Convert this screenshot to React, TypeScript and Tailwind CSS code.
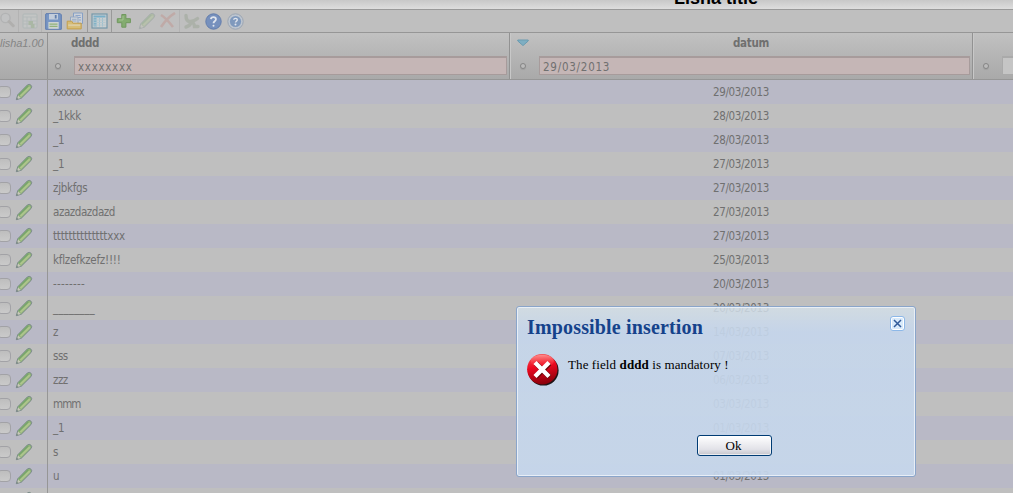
import React from "react";

const TABLE_FONT = "font-['DejaVu_Sans_Condensed','DejaVu_Sans',sans-serif] [font-stretch:condensed]";

const rows = [
  { text: "xxxxxx", date: "29/03/2013", track: "tracking-[-1px]" },
  { text: "_1kkk", date: "28/03/2013", track: "tracking-[-0.4px]" },
  { text: "_1", date: "28/03/2013", track: "tracking-[-0.1px]" },
  { text: "_1", date: "27/03/2013", track: "tracking-[-0.1px]" },
  { text: "zjbkfgs", date: "27/03/2013", track: "tracking-[-0.3px]" },
  { text: "azazdazdazd", date: "27/03/2013", track: "tracking-[-0.44px]" },
  { text: "ttttttttttttttxxx", date: "27/03/2013", track: "tracking-[-0.18px]" },
  { text: "kflzefkzefz!!!!", date: "25/03/2013", track: "tracking-[-0.25px]" },
  { text: "--------", date: "20/03/2013", track: "tracking-[0.25px]" },
  { text: "________", date: "20/03/2013", track: "tracking-[0.05px]" },
  { text: "z", date: "14/03/2013", track: "tracking-[0px]" },
  { text: "sss", date: "07/03/2013", track: "tracking-[-0.5px]" },
  { text: "zzz", date: "06/03/2013", track: "tracking-[-0.5px]" },
  { text: "mmm", date: "03/03/2013", track: "tracking-[-0.9px]" },
  { text: "_1", date: "01/03/2013", track: "tracking-[-0.1px]" },
  { text: "s", date: "01/03/2013", track: "tracking-[0px]" },
  { text: "u", date: "01/03/2013", track: "tracking-[0px]" },
  { text: "", date: "", track: "tracking-[0px]" },
];

function Pencil({ className = "" }: { className?: string }) {
  return (
    <svg width="18" height="18" viewBox="0 0 18 18" className={`shrink-0 ${className}`}>
      <path d="M1.3 16.7 2.7 11.8 12.3 2Q14.2.6 15.9 2.1T15.9 5.7L6.3 15.2Z" fill="#8fb277" stroke="#7d8c8d" strokeWidth="1" strokeLinejoin="round" />
      <path d="M4 12 13.3 2.8" stroke="#76a56b" strokeWidth="1.5" />
      <path d="M5.4 13.3 14.9 4" stroke="#adc58c" strokeWidth="1.9" />
      <path d="M3.1 12.4 5.8 14.9 2.3 15.9Z" fill="#c9c7bd" />
      <path d="m1.3 16.7.6-1.9 1.4 1.3Z" fill="#7d8688" />
    </svg>
  );
}

function Magnifier() {
  return (
    <svg width="18" height="18" viewBox="0 0 18 18" className="opacity-25">
      <circle cx="5.5" cy="6" r="4.6" fill="#c9cdd0" stroke="#8c9093" strokeWidth="1.4" />
      <path d="m9 9.5 4.2 4.2" stroke="#84807c" strokeWidth="3" strokeLinecap="round" />
    </svg>
  );
}

function TableDown() {
  return (
    <svg width="16" height="16" viewBox="0 0 16 16" className="opacity-30">
      <rect x="1" y="1" width="14" height="14" rx="1" fill="#cdd3d2" stroke="#8fa7a5" />
      <path d="M1 4h14M5 4v11M9 4v11M1 8h14M1 11h14" stroke="#99afae" />
      <path d="M6.5 8h4.5v3h1.5v4H9v-3H6.5Z" fill="#7da76b" />
    </svg>
  );
}

function Floppy() {
  return (
    <svg width="17" height="17" viewBox="0 0 17 17" className="shrink-0">
      <path d="M1 .7h14.3l1 1.1V16.3H.7V1.2Z" fill="#7896c4" stroke="#5d7bae" />
      <rect x="4" y="1" width="9" height="5.5" fill="#c3cddb" />
      <rect x="9.8" y="2" width="1.8" height="3.5" fill="#617fac" />
      <rect x="3.4" y="9" width="10.3" height="6.8" fill="#ced4d2" />
      <path d="M4.5 11.2h8M4.5 13.3h8" stroke="#91b37b" strokeWidth="1.2" />
    </svg>
  );
}

function Documents() {
  return (
    <svg width="18" height="18" viewBox="0 0 18 18" className="shrink-0">
      <path d="M7.5 1h9v10.5h-9Z" fill="#cbd0d7" stroke="#86a0c5" />
      <path d="M9.5 3.5h5M10 5.5h5M13 8h2" stroke="#8da5c9" />
      <path d="M4.5 5h7.5v8H4.5Z" fill="#ced2d6" stroke="#93a7c3" />
      <path d="M6 7.3h4.5M6 9h4.5" stroke="#9aadc7" />
      <path d="M1.2 9.2h4.6l1 2h8.4v5.7H1.2Z" fill="#d6bd76" stroke="#c49f4c" />
      <path d="M2.2 13.2h12" stroke="#dccda3" strokeWidth="1.8" />
    </svg>
  );
}

function Grid() {
  return (
    <svg width="17" height="16" viewBox="0 0 17 16" className="shrink-0">
      <rect x="1" y="1" width="15" height="14" fill="#c9ced0" stroke="#7598aa" strokeWidth="1.2" />
      <path d="M2.5 3.5h12" stroke="#78afc8" strokeWidth="2" />
      <path d="M2.5 5h3v8.5h-3Z" fill="#83b2c6" />
      <path d="M5.5 5v8.5M8.5 5v8.5M11.5 5v8.5" stroke="#9fbfcd" />
      <path d="M2.5 7h12M2.5 9.5h12M2.5 12h12" stroke="#b0c6cf" strokeWidth=".9" />
    </svg>
  );
}

function HelpIcon({ ringed = false }: { ringed?: boolean }) {
  return (
    <svg width="17" height="17" viewBox="0 0 17 17">
      <circle cx="8.5" cy="8.5" r="7.7" fill={ringed ? "#bdc5cf" : "#7690bd"} stroke={ringed ? "#9ba5b3" : "#637dac"} />
      {ringed && <circle cx="8.5" cy="8.5" r="5.6" fill="#7f99bd" />}
      <path d={ringed ? "M6.7 6.8C6.9 4.8 10.5 4.9 10.2 7.1 10.1 8.2 8.5 8.3 8.5 9.6" : "M5.9 6.2C6.2 3.3 11.3 3.5 10.9 6.5 10.7 8.3 8.5 8.2 8.5 10.2"} fill="none" stroke="#dfe4ed" strokeWidth={ringed ? 1.4 : 1.8} />
      <circle cx="8.5" cy={ringed ? 11.5 : 12.7} r="1" fill="#dfe4ed" />
    </svg>
  );
}

function Toolbar() {
  return (
    <div className="flex h-[22px] shrink-0 items-center bg-[#bfbfbf]">
      <div className="flex h-full w-[19px] items-center border-r border-[#b3b3b3]"><Magnifier /></div>
      <div className="flex h-full w-[23px] items-center justify-center border-r border-[#b3b3b3]"><TableDown /></div>
      <div className="flex h-full w-[46px] items-center gap-1 border-r border-[#999] pl-[3px]"><Floppy /><Documents /></div>
      <div className="flex h-full w-6 items-center justify-center border-r border-[#999]"><Grid /></div>
      <div className="flex h-full w-[68px] items-center border-r border-[#b3b3b3] pl-1">
        <svg width="16" height="16" viewBox="0 0 16 16" className="shrink-0">
          <path d="M5.8 1.5h4.1v4.2h4.5v4H9.9v4.5H5.8V9.7H1.3v-4h4.5Z" fill="#84ac70" stroke="#70985f" strokeLinejoin="round" />
          <path d="M7 3v4H3" fill="none" stroke="#a2c291" />
        </svg>
        <Pencil className="ml-[6px] opacity-35" />
        <svg width="18" height="18" viewBox="0 0 18 18" className="ml-[3px] shrink-0 opacity-35">
          <path d="M2 3Q7 6 14 15M16 1Q8 6 2 15" fill="none" stroke="#c1847c" strokeWidth="2.6" />
        </svg>
      </div>
      <div className="flex items-center gap-[5px] pl-[3px]">
        <svg width="17" height="17" viewBox="0 0 17 17" className="opacity-30">
          <path d="M3 2.5Q3 8 6.5 8.5T14.5 5.5M3 14Q7 13 8 9.5 11 9 11.5 13.5H15" fill="none" stroke="#81947a" strokeWidth="3.4" strokeLinecap="round" />
        </svg>
        <HelpIcon /><HelpIcon ringed />
      </div>
    </div>
  );
}

function Option() {
  return <span className="size-[6px] shrink-0 rounded-full border border-[#868686] bg-[#bbb] shadow-[0_1px_1px_#a0a0a0]" />;
}

function ColumnHeads() {
  return (
    <div className={`flex h-12 shrink-0 border-y border-[#969696] bg-linear-to-b from-[#c1c1c1] to-[#a9a9a9] text-[#707070] ${TABLE_FONT}`}>
      <div className="w-12 shrink-0 whitespace-nowrap border-r border-[#929292] pt-[3px] font-['Liberation_Sans',sans-serif] text-[11px] leading-[14px] tracking-[-0.05px] text-[#858585] italic">lisha1.00</div>
      <div className="flex w-[462px] shrink-0 flex-col border-r border-[#929292]">
        <div className="h-[23px] pt-[3px] pl-[23px] text-[11.5px] leading-[14px] font-bold tracking-[-0.4px]">dddd</div>
        <div className="flex items-center pr-[2px] pl-[7px]">
          <Option />
          <div className="ml-[13px] h-[19px] flex-1 border border-t-2 border-[#a79b9b] bg-[#c5b6b6] pl-[3px] font-['DejaVu_Sans',sans-serif] text-[11.5px] leading-[19px] tracking-[0.7px]">xxxxxxxx</div>
        </div>
      </div>
      <div className="flex w-[463px] shrink-0 flex-col border-r border-l border-r-[#929292] border-l-[#c8c8c8]">
        <div className="flex h-[23px] items-start pt-[3px] text-[11.5px] leading-[14px] font-bold tracking-[-0.3px]">
          <svg width="12" height="8" viewBox="0 0 12 8" className="mt-[3px] ml-[6px] shrink-0"><path d="M.8 1h10.4v1L6 6.6.8 2Z" fill="#7eaec2" stroke="#6a9bb0" /></svg>
          <span className="flex-1 pl-[1px] text-center">datum</span>
        </div>
        <div className="flex items-center pr-[2px] pl-[9px]">
          <Option />
          <div className="ml-[13px] h-[19px] flex-1 border border-t-2 border-[#a79b9b] bg-[#c5b6b6] pl-[3px] font-['DejaVu_Sans',sans-serif] text-[11.5px] leading-[19px] tracking-[0.75px] [font-stretch:condensed]">29/03/2013</div>
        </div>
      </div>
      <div className="flex flex-1 items-start border-l border-[#c8c8c8] pt-[23px] pl-[9px]">
        <span className="mt-[7px] flex"><Option /></span><div className="ml-[13px] h-[19px] flex-1 border border-r-0 border-t-2 border-[#aaa] bg-[#c5c5c5]" />
      </div>
    </div>
  );
}

function Dialog() {
  return (
    <div role="dialog" className="absolute top-[306px] left-[516px] flex h-[171px] w-[400px] flex-col rounded-[3px] border border-[#8aa5ca] bg-linear-to-b from-[#d6e2ea]/80 via-[#c6d7ec]/90 via-15% to-[#c6d7ec]/92 font-['Liberation_Serif',serif] text-black shadow-[inset_0_0_0_1px_rgba(235,241,247,0.9)]">
      <div className="flex h-[46px] shrink-0 items-start justify-between pt-[9px] pr-[10px] pl-[10px]">
        <h2 className="text-[20px] leading-[23px] font-bold tracking-[0.16px] text-[#15428b]">Impossible insertion</h2>
        <button className="flex size-[15px] items-center justify-center rounded-[3px] border border-[#8db8e8] bg-[#d8eafb] shadow-[inset_0_0_0_1px_#fff]">
          <svg width="9" height="9" viewBox="0 0 9 9"><path d="m1 1 7 7M8 1 1 8" stroke="#315a99" strokeWidth="1.5" /></svg>
        </button>
      </div>
      <div className="flex h-[82px] shrink-0 items-start pl-[9px]">
        <svg width="34" height="34" viewBox="0 0 34 34" className="shrink-0">
          <defs>
            <linearGradient id="ball" x1=".4" y1="0" x2=".6" y2="1"><stop stopColor="#f65052" /><stop offset=".4" stopColor="#ed0920" /><stop offset="1" stopColor="#85000a" /></linearGradient>
            <linearGradient id="shine" x1="0" y1="0" x2="0" y2="1"><stop stopColor="#ffa0a0" stopOpacity=".8" /><stop offset="1" stopColor="#ff3036" stopOpacity="0" /></linearGradient>
          </defs>
          <circle cx="17.4" cy="17.4" r="15.2" fill="#1d1517" />
          <circle cx="16.3" cy="16.2" r="15.2" fill="url(#ball)" />
          <ellipse cx="16.3" cy="8.2" rx="11.5" ry="6.5" fill="url(#shine)" />
          <path d="m10 10.5 13.5 13.5M23.5 10.5 10 24" stroke="#6c0709" strokeWidth="5" />
          <path d="m9 9.5 14 14M23 9.5 9 23.5" stroke="white" strokeWidth="4.4" />
        </svg>
        <p className="mt-1 ml-2 text-[13px] leading-4 tracking-[0.1px] whitespace-pre">The field <b>dddd</b> is mandatory !</p>
      </div>
      <button className="ml-[180px] h-[21px] w-[75px] rounded-[3px] border border-[#003c74] bg-linear-to-b from-white via-[#e2e2e8] via-70% to-[#c5c5cb] pr-[2px] text-center text-[13px] leading-[19px] shadow-[inset_0_0_0_1px_rgba(255,255,255,.65)]">Ok</button>
    </div>
  );
}

export default function App() {
  return (
    <main className="relative flex h-[493px] w-[1013px] flex-col overflow-hidden bg-[#bfbfbf]">
      <header className="flex h-[10px] shrink-0 items-end overflow-hidden border-b border-[#999] bg-linear-to-b from-[#c8c8c8] to-[#dedede] pl-[674px]">
        <h1 className="mb-px text-[18px] leading-5 font-bold font-['Liberation_Sans',sans-serif] text-black">Lisha title</h1>
      </header>
      <Toolbar />
      <ColumnHeads />
      <div className={`text-[11.5px] text-[#707070] ${TABLE_FONT}`}>
        {rows.map((row, i) => (
          <div key={i} className="flex h-6 odd:bg-[#b9b9c6] even:bg-[#bfbfbf]">
            <div className="flex w-12 shrink-0 items-center border-r border-[#969696]">
              <span className="mb-px ml-[-3px] h-3 w-[14px] shrink-0 rounded-[4px] border border-[#a2a2a6] bg-linear-to-b from-[#bebebe] to-[#cacaca]" />
              <Pencil className="ml-1" />
            </div>
            <div className={`w-[462px] shrink-0 pt-px pl-[5px] leading-[23px] ${row.track}`}>{row.text}</div>
            <div className="w-[463px] shrink-0 pt-px pr-px text-center leading-[23px] tracking-[-0.38px]">{row.date}</div>
          </div>
        ))}
      </div>
      <Dialog />
    </main>
  );
}
